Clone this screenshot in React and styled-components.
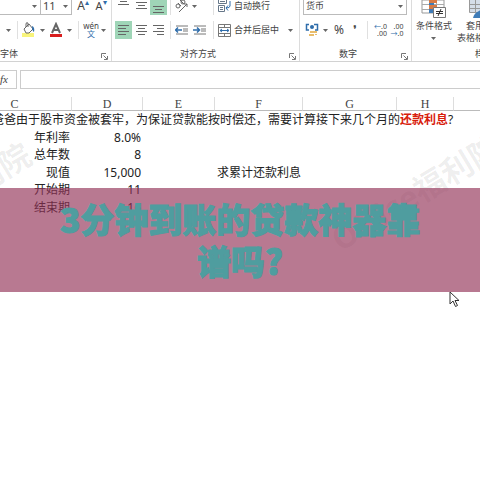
import React from 'react';
import styled, { createGlobalStyle, css } from 'styled-components';

const columns = ['C', 'D', 'E', 'F', 'G', 'H', ''];

const rows = [
  { label: '年利率', value: '8.0%' },
  { label: '总年数', value: '8' },
  { label: '现值', value: '15,000', note: '求累计还款利息' },
  { label: '开始期', value: '11' },
  { label: '结束期', value: '16' },
];

const Caret = () => (
  <svg width="5" height="3" aria-hidden="true">
    <path d="M0 0h5L2.5 3z" fill="#666" />
  </svg>
);

const Launcher = () => (
  <svg width="7" height="7" aria-hidden="true" fill="none" stroke="#777">
    <path d="M0.5 5V0.5H5M2.5 2.5L6 6M6.5 3v3.5H3" />
  </svg>
);

// strokes of the given widths, drawn from `left`, `center` or `right`
const Lines = ({ align = 'center', widths, top = 4 }) => (
  <svg width="17" height="18" aria-hidden="true" fill="#666">
    {widths.map((w, i) => {
      const x = align === 'left' ? 3 : align === 'right' ? 14 - w : Math.floor((17 - w) / 2);
      return <rect key={i} x={x} y={top + i * 3} width={w} height="1" />;
    })}
  </svg>
);

const Bucket = () => (
  <svg width="14" height="16" aria-hidden="true" fill="none">
    <path d="M0 11h12v4H0z" fill="#f8f47c" />
    <path d="M2 7l5-5 4 5-4 4H4z" fill="#fff" stroke="#666" />
    <path d="M4 5V2q0-2 2-1v4" stroke="#666" />
    <path d="M10 4q3 1 2 6-2-1-2-6z" fill="#2f6dab" />
  </svg>
);

const FontColor = () => (
  <svg width="14" height="16" aria-hidden="true" fill="none">
    <path d="M3 11l4-9 4 9M4.500 8h5" stroke="#666" strokeWidth="2" />
    <path d="M1 12h12v3H1z" fill="#d81e1e" />
  </svg>
);

const Orientation = () => (
  <svg width="14" height="14" aria-hidden="true" fill="none" stroke="#666">
    <circle cx="3" cy="7" r="2" />
    <path d="M3 4l3 3M5 1l4 4M4 13l8-8M12 8V5H9" />
    <circle cx="8" cy="3" r="2" />
  </svg>
);

const Indent = ({ right }) => (
  <svg width="14" height="10" aria-hidden="true" fill="none">
    <path d="M1 1h12M8 4h5M8 6h5M1 9h12" stroke="#777" />
    <path d={right ? 'M0 5h6M4 2.500L6.500 5 4 7.500' : 'M7 5H1M3 2.500L0.500 5 3 7.500'} stroke="#2f6dab" strokeWidth="1.500" />
  </svg>
);

const WrapIcon = () => (
  <svg width="13" height="12" aria-hidden="true" fill="none">
    <path d="M0.500 0v3.500h8V0M0.500 5.500h6v6h-6zM2 7.500h3M2 9.500h3M2 1.500h5" stroke="#667789" />
    <path d="M12 1v5q0 2-4 2M10 5.500L8 8l2 2.500" stroke="#2f6dab" />
  </svg>
);

const MergeIcon = () => (
  <svg width="13" height="13" aria-hidden="true" fill="none">
    <path d="M0.500 0.500h12v12H0.500zM0 3.500h13M0 9.500h13M6.500 0v3M6.500 10v3" stroke="#777" />
    <path d="M2 6.500h9M4 5L2 6.500 4 8M9 5l2 1.500L9 8" stroke="#2f6dab" />
  </svg>
);

const MoneyIcon = () => (
  <svg width="14" height="14" aria-hidden="true" fill="none">
    <path d="M4 1.500H1.500V7H4M9 1.500h3.500V7H10" stroke="#2f6dab" strokeWidth="1.500" />
    <circle cx="7" cy="4" r="2" fill="#2f6dab" />
    <path d="M5 8h7v2H5zM4 11h5v2H4zM10 11h2v1h-2z" fill="#e9bd6c" />
  </svg>
);

const RulesIcon = () => (
  <svg width="26" height="18" aria-hidden="true">
    <path d="M1 0h22v13H1z" fill="#fff" stroke="#999" />
    <path d="M8.500 0v13M15.500 0v13M1 4.500h22M1 9.500h22" stroke="#aaa" />
    <path d="M8 0h8v3H8zM8 5h8v4H8z" fill="#d67a45" />
    <path d="M8 3h5v2H8zM8 9h5v4H8z" fill="#3f7cb8" />
    <path d="M12.500 7.500h12v10h-12z" fill="#fff" stroke="#777" />
    <path d="M15 11.500h7M15 13.500h7M20 9l-3 7" stroke="#333" />
  </svg>
);

const TableStyleIcon = () => (
  <svg width="26" height="18" aria-hidden="true">
    <path d="M7 0h18v12H7z" fill="#d5dde8" />
    <path d="M7.500 0v12.500H25M13.500 0v12M19.500 0v12M7 4.500h18M7 8.500h18" fill="none" stroke="#999" />
    <path d="M11 18q1-5 6-7l5-4v11z" fill="#3f7cb8" />
  </svg>
);

const App = () => {
  return (
    <Page>
      <GlobalStyle />
      <Ribbon>
        <Group>
          <Tools $cols="41px 31px 22px 14px" $top>
            <Combo>
              <select aria-label="字体名称"><option></option></select>
              <Caret />
            </Combo>
            <Combo $large>
              <select aria-label="字号" defaultValue="11"><option>11</option></select>
              <Caret />
            </Combo>
            <Tool aria-label="增大字号"><Letter $size={12}>A<sup>▴</sup></Letter></Tool>
            <Tool aria-label="减小字号"><Letter $size={11}>A<sup>▾</sup></Letter></Tool>
          </Tools>
          <Tools $cols="16px 2px 22px 4px 23px 4px 14px 12px 12px">
            <Tool aria-label="边框"><Caret /></Tool>
            <Divider />
            <Tool aria-label="填充颜色"><Bucket /></Tool>
            <Tool aria-label="填充选项"><Caret /></Tool>
            <Tool aria-label="字体颜色"><FontColor /></Tool>
            <Tool aria-label="颜色选项"><Caret /></Tool>
            <Divider />
            <Tool aria-label="拼音"><Pinyin>wén<b>文</b></Pinyin></Tool>
            <Tool aria-label="拼音选项"><Caret /></Tool>
          </Tools>
          <GroupName $start>字体<Tool aria-label="字体设置"><Launcher /></Tool></GroupName>
        </Group>

        <Group $inset>
          <Tools $cols="17px 18px 17px 6px 17px 8px 16px 67px" $top>
            <Tool aria-label="顶端对齐"><Lines widths={[11, 7, 11]} top={1} /></Tool>
            <Tool aria-label="垂直居中"><Lines widths={[11, 7, 11]} top={5} /></Tool>
            <Tool aria-label="底端对齐" $on><Lines widths={[11, 7, 11]} top={9} /></Tool>
            <Divider />
            <Tool aria-label="方向"><Orientation /></Tool>
            <Tool aria-label="方向选项"><Caret /></Tool>
            <Divider $end />
            <TextTool><WrapIcon />自动换行</TextTool>
          </Tools>
          <Tools $cols="17px 18px 17px 6px 18px 18px 5px 67px 18px">
            <Tool aria-label="左对齐" $on><Lines align="left" widths={[11, 8, 11, 8]} /></Tool>
            <Tool aria-label="居中"><Lines widths={[11, 7, 11, 7]} /></Tool>
            <Tool aria-label="右对齐"><Lines align="right" widths={[11, 7, 11, 7]} /></Tool>
            <Divider />
            <Tool aria-label="减少缩进量"><Indent /></Tool>
            <Tool aria-label="增加缩进量"><Indent right /></Tool>
            <Divider $end />
            <TextTool><MergeIcon />合并后居中</TextTool>
            <Tool aria-label="合并选项"><Caret /></Tool>
          </Tools>
          <GroupName>对齐方式<Tool aria-label="对齐设置"><Launcher /></Tool></GroupName>
        </Group>

        <Group $inset>
          <Tools $cols="104px" $top>
            <Combo $boxed>
              <select aria-label="数字格式"><option>货币</option></select>
              <Caret />
            </Combo>
          </Tools>
          <Tools $cols="18px 8px 20px 12px 13px 13px 20px">
            <Tool aria-label="会计数字格式"><MoneyIcon /></Tool>
            <Tool aria-label="货币选项"><Caret /></Tool>
            <Tool><Letter $size={12}>%</Letter></Tool>
            <Tool aria-label="千位分隔样式"><Letter $size={12}>❜</Letter></Tool>
            <Divider />
            <Tool aria-label="增加小数位数"><Decimals><span><i>←</i>.0</span><span>.00</span></Decimals></Tool>
            <Tool aria-label="减少小数位数"><Decimals><span>.00</span><span><i>→</i>.0</span></Decimals></Tool>
          </Tools>
          <GroupName>数字<Tool aria-label="数字设置"><Launcher /></Tool></GroupName>
        </Group>

        <StyleGroup>
          <StyleButtons>
            <BigTool><RulesIcon /><span>条件格式</span><span><Caret /></span></BigTool>
            <BigTool><TableStyleIcon /><span>套用</span><span>表格格式</span></BigTool>
          </StyleButtons>
          <GroupName>样式</GroupName>
        </StyleGroup>
      </Ribbon>

      <FormulaBar>
        <FxButton aria-label="插入函数">fx</FxButton>
        <FormulaInput aria-label="编辑栏" />
      </FormulaBar>

      <Sheet>
        <Watermark $x={-136} $y={137}>Office福利院</Watermark>
        <Watermark $x={334} $y={129}>Office福利院</Watermark>
        <Grid>
          <colgroup>
            {[114, 71, 72, 88, 94, 57].map((w, i) => <Col key={i} $w={w} />)}
            <col />
          </colgroup>
          <thead>
            <tr>{columns.map((c, i) => <th key={i}>{c}</th>)}</tr>
          </thead>
          <tbody>
            <tr>
              <Question colSpan={7}>
                爸爸由于股市资金被套牢，为保证贷款能按时偿还，需要计算接下来几个月的<strong>还款利息</strong>?
              </Question>
            </tr>
            {rows.map((row) => (
              <tr key={row.label}>
                <td>{row.label}</td>
                <td>{row.value}</td>
                <td />
                <td>{row.note}</td>
                <td colSpan={3} />
              </tr>
            ))}
          </tbody>
        </Grid>
      </Sheet>

      <Banner>3分钟到账的贷款神器靠谱吗?</Banner>
      <Pointer width="11" height="17" aria-hidden="true">
        <path d="M1 1v12l3-3 2.500 5.500 2-1L6 9.500h4z" fill="#fff" stroke="#333" />
      </Pointer>
    </Page>
  );
};

const GlobalStyle = createGlobalStyle`
  * { box-sizing: border-box; }
  body { margin: 0; background: #fff; }
  button, input, select { font: inherit; color: inherit; }
  svg { display: block; flex: none; }
`

const Page = styled.div`
  position: relative;
  min-height: 100vh;
  overflow: hidden;
  color: #222;
  font: 12px/17px "Noto Sans", "Noto Sans CJK SC", sans-serif;
`

const Ribbon = styled.header`
  display: flex;
  height: 62px;
  border-bottom: 1px solid #d2d2d2;
  overflow: hidden;
  color: #444;
  font-size: 9px;
  line-height: 12px;
`

const Group = styled.section`
  flex: none;
  display: grid;
  grid-template-rows: 15px 30px 16px;
  border-right: 1px solid #dcdcdc;
  padding-left: ${(p) => (p.$inset ? '3px' : '0')};
  &:first-child { width: 112px; }
  &:nth-child(2) { width: 188px; }
  &:nth-child(3) { width: 112px; }
`

const Tools = styled.div`
  display: grid;
  grid-template-columns: ${(p) => p.$cols};
  grid-template-rows: 100%;
  justify-items: center;
  align-items: ${(p) => (p.$top ? 'end' : 'center')};
`

const Tool = styled.button`
  display: flex;
  align-items: center;
  justify-content: center;
  height: 18px;
  padding: 0;
  border: 0;
  background: ${(p) => (p.$on ? '#9fd5b7' : 'none')};
`

const TextTool = styled(Tool)`
  justify-self: start;
  gap: 3px;
  padding-left: 4px;
  white-space: nowrap;
`

const Divider = styled.span`
  width: 1px;
  height: 18px;
  background: #e0e0e0;
  ${(p) => p.$end && css`justify-self: end;`}
`

const Combo = styled.label`
  display: flex;
  align-items: center;
  width: 100%;
  height: 18px;
  padding-right: 3px;
  border: 1px solid #bbb;
  border-left-width: ${(p) => (p.$boxed ? '1px' : '0')};
  font-size: ${(p) => (p.$large ? '11px' : '9px')};
  select {
    flex: 1;
    min-width: 0;
    padding: 0 2px;
    border: 0;
    background: none;
    appearance: none;
  }
`

const Letter = styled.span`
  font-size: ${(p) => p.$size}px;
  sup {
    color: #2f6dab;
    font-size: 8px;
    line-height: 0;
  }
`

const Pinyin = styled.span`
  display: grid;
  justify-items: center;
  font-size: 8px;
  line-height: 8px;
  b {
    color: #2f6dab;
    font-weight: 400;
    line-height: 8px;
  }
`

const Decimals = styled.span`
  display: grid;
  justify-items: end;
  font-size: 7px;
  line-height: 7px;
  i {
    color: #2f6dab;
    font-style: normal;
  }
`

const GroupName = styled.div`
  display: flex;
  align-items: center;
  justify-content: ${(p) => (p.$start ? 'space-between' : 'center')};
  position: relative;
  padding-right: ${(p) => (p.$start ? '3px' : '18px')};
  padding-top: 2px;
  ${Tool} {
    position: absolute;
    right: 3px;
    top: 2px;
  }
`

const StyleGroup = styled.section`
  flex: none;
  display: grid;
  grid-template-rows: 45px 16px;
  width: 162px;
`

const StyleButtons = styled.div`
  display: grid;
  grid-template-columns: 44px 38px;
`

const BigTool = styled.button`
  display: grid;
  grid-template-rows: 20px 12px 12px;
  justify-content: center;
  justify-items: center;
  align-content: start;
  padding: 0;
  border: 0;
  background: none;
  white-space: nowrap;
  span {
    display: flex;
    align-items: center;
  }
`

const FormulaBar = styled.div`
  display: flex;
  gap: 3px;
  height: 19px;
  margin: 8px 0;
`

const FxButton = styled.button`
  width: 17px;
  padding: 0 8px 0 0;
  border: 1px solid #ccc;
  border-left: 0;
  background: none;
  color: #444;
  font: italic 11px/17px "Liberation Serif", serif;
`

const FormulaInput = styled.input`
  flex: 1;
  min-width: 0;
  border: 1px solid #ccc;
  border-right: 0;
  background: none;
`

const Sheet = styled.main`
  position: relative;
`

const Watermark = styled.div`
  position: absolute;
  left: ${(p) => p.$x}px;
  top: ${(p) => p.$y}px;
  transform: rotate(-31deg);
  transform-origin: left center;
  color: rgba(0, 0, 0, 0.07);
  font: bold 32px/32px "Noto Sans", "Noto Sans CJK SC", sans-serif;
  white-space: nowrap;
`

// column C starts outside the left edge of the window
const Grid = styled.table`
  position: relative;
  width: calc(100% + 42px);
  margin-left: -42px;
  border-collapse: separate;
  border-spacing: 0;
  table-layout: fixed;
  th {
    height: 14px;
    padding: 2px 0 0;
    border-right: 1px solid #ddd;
    border-bottom: 1px solid #bbb;
    color: #444;
    font: 12px/11px "Liberation Serif", serif;
  }
  th:last-child { border-right: 0; }
  td {
    height: 17px;
    padding: 0 2px;
    text-align: right;
    white-space: nowrap;
    line-height: 17px;
  }
  tr:nth-child(even) td { height: 18px; }
`

const Col = styled.col`
  width: ${(p) => p.$w}px;
`

const Question = styled.td`
  &&& {
    padding-left: 34px;
    text-align: left;
  }
  strong { color: #d8200c; }
`

const Banner = styled.h1`
  position: absolute;
  top: 188px;
  left: 0;
  right: 0;
  margin: 0;
  padding: 10px 56px;
  background: rgba(146, 49, 86, 0.65);
  color: #4f9d9f;
  font: 900 34px/42px "Noto Sans CJK SC", sans-serif;
  text-align: center;
  -webkit-text-stroke: 1px #4f9d9f;
`

const Pointer = styled.svg`
  position: absolute;
  top: 291px;
  left: 449px;
`

export default App;
